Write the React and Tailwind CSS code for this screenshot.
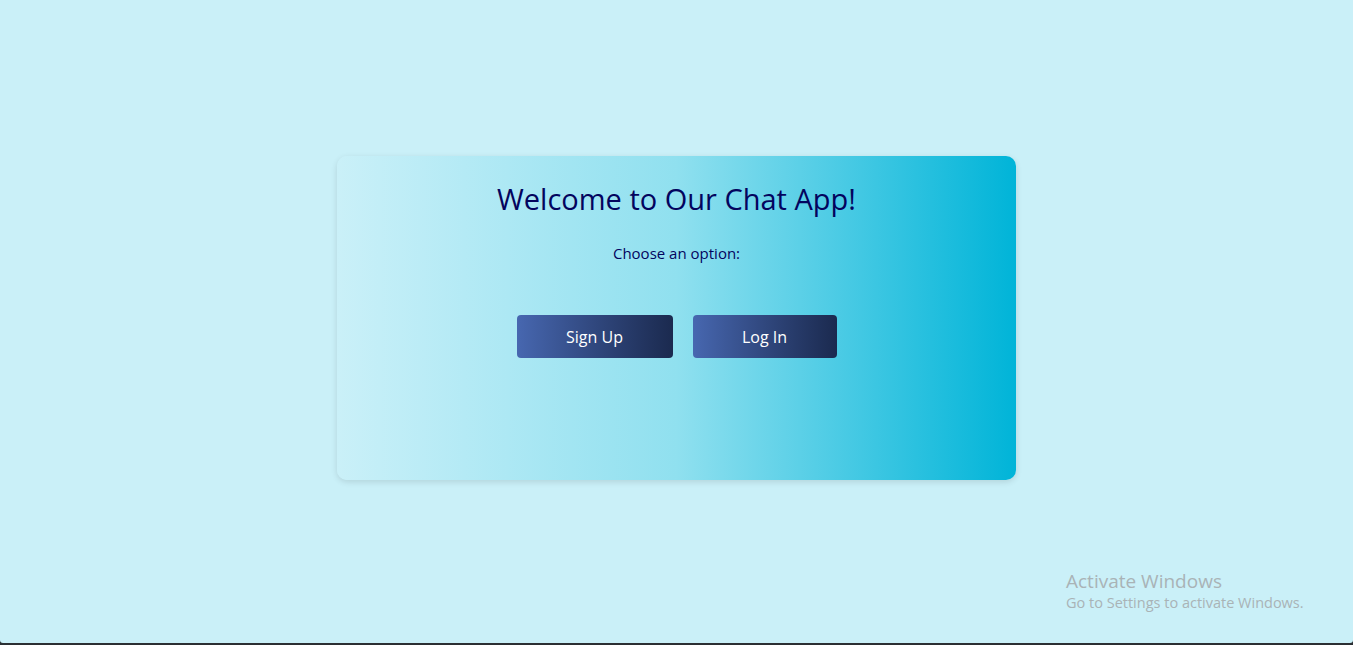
import React from 'react'

const App = () => {
  return (
    <div className="w-[1353px] h-[645px] bg-[#2b2f33] overflow-hidden" style={{ fontFamily: '"Open Sans", "Noto Sans", sans-serif' }}>
      <div className="relative h-[643px] bg-[#caf0f8] rounded-b-[3px] flex items-center justify-center">
        {/* card */}
        <div className="w-[679px] h-[324px] -mt-[7px] rounded-[10px] bg-[linear-gradient(to_right,#caf0f8,#ade8f4,#90e0ef,#48cae4,#00b4d8)] shadow-[0_2px_6px_rgba(0,0,0,0.12)] flex flex-col items-center pt-[24px]">
          <h1 className="text-[29px] leading-[38px] text-[#03045e]">Welcome to Our Chat App!</h1>
          <p className="mt-[25px] text-[15px] leading-[20px] text-[#03045e]">Choose an option:</p>
          <div className="mt-[52px] flex gap-5">
            <button className="w-[156px] h-[43px] rounded-[4px] bg-gradient-to-r from-[#4767b0] to-[#1b2a4f] text-white text-[16px]">Sign Up</button>
            <button className="w-[144px] h-[43px] rounded-[4px] bg-gradient-to-r from-[#4767b0] to-[#1b2a4f] text-white text-[16px]">Log In</button>
          </div>
        </div>
        <div className="absolute left-[1066px] top-[569px] text-[#a9b3b6]">
          <div className="text-[19px] leading-[24px]">Activate Windows</div>
          <div className="text-[14.5px] leading-[20px]">Go to Settings to activate Windows.</div>
        </div>
      </div>
    </div>
  )
}

export default App
